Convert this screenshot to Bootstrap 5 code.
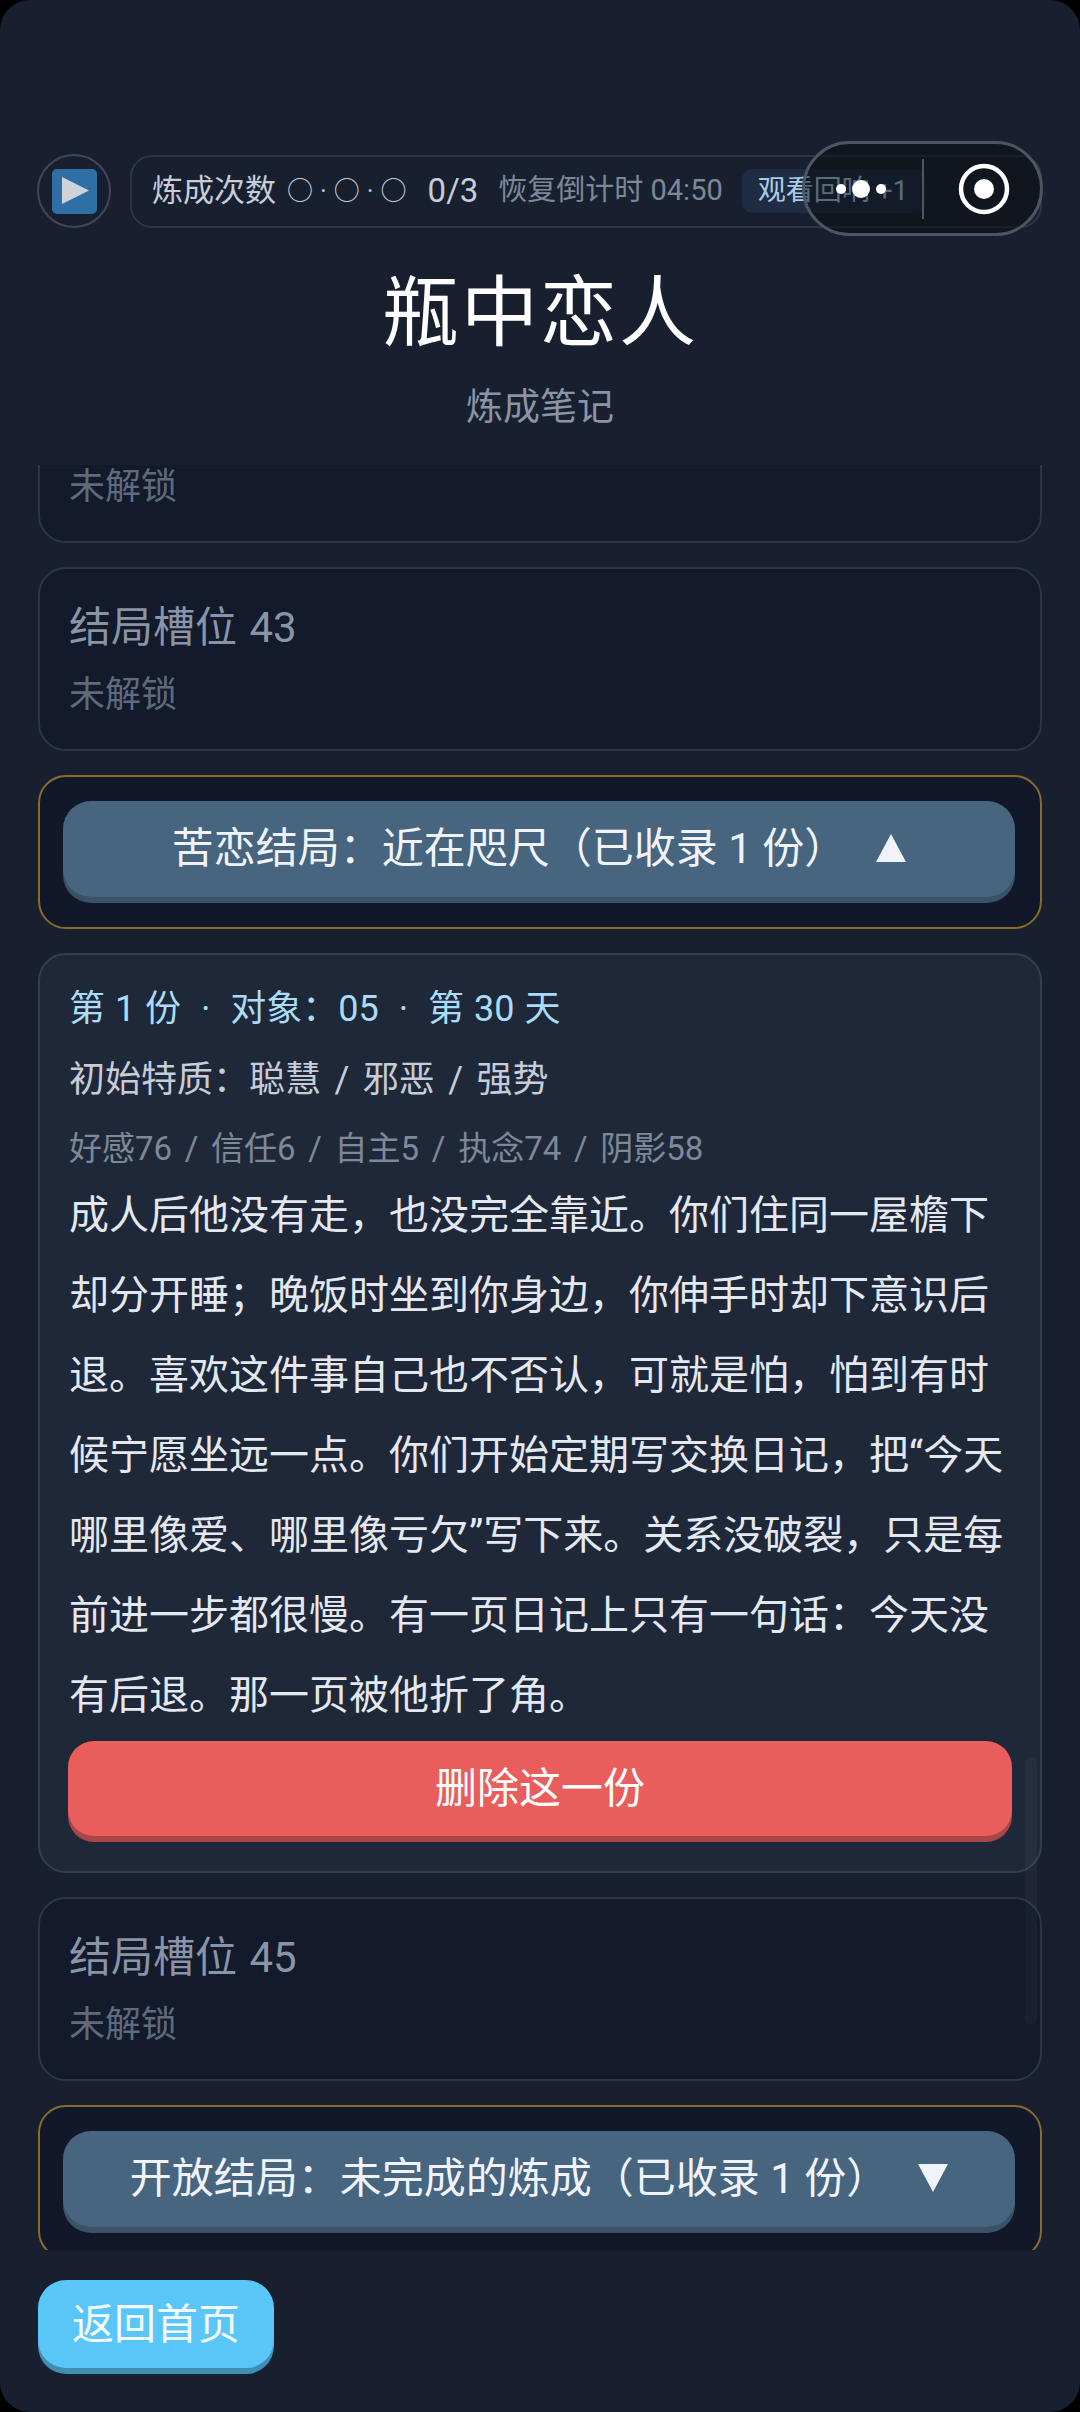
<!DOCTYPE html>
<html lang="zh-CN">
<head>
  <meta charset="UTF-8">
  <title>瓶中恋人</title>
  <meta name="viewport" content="width=device-width, initial-scale=1">
  <link href="https://cdn.jsdelivr.net/npm/bootstrap@5.3.3/dist/css/bootstrap.min.css" rel="stylesheet">
  <style>
    body {
      background: #000;
      font-family: Roboto, "Noto Sans CJK SC", sans-serif;
    }
    .app-shell {
      position: relative;
      height: 2412px;
      background: #182030;
      border-radius: 30px;
      padding-top: 154px;
      overflow: hidden;
    }
    .top-row {
      padding: 0 38px 0 37px;
      gap: 19px;
    }
    .logo-ring {
      width: 74px;
      height: 74px;
      flex: none;
      border: 2px solid #3f4759;
      border-radius: 50%;
    }
    .logo-box {
      width: 45px;
      height: 45px;
      background: #2f6fa6;
      border-radius: 5px;
    }
    .stat-pill {
      height: 73px;
      border: 2px solid #2d3546;
      border-radius: 22px;
      padding-left: 20px;
      white-space: nowrap;
      flex: 1;
      min-width: 0;
    }
    .stat-label { font-size: 31px; color: #c6ccd8; }
    .stat-dots { font-size: 26px; color: #c6ccd8; margin-left: 11px; letter-spacing: 7px; }
    .stat-count { font-size: 33px; color: #c6ccd8; margin-left: 14px; }
    .stat-timer { font-size: 29px; color: #7d8899; margin-left: 20px; }
    .echo-chip {
      height: 44px;
      margin-left: 19px;
      padding: 0 18px 0 16px;
      background: #1f2c44;
      border-radius: 10px;
      font-size: 28px;
      color: #a9cce6;
    }
    .mini-capsule {
      position: absolute;
      left: 802px;
      top: 141px;
      width: 241px;
      height: 95px;
      background: rgba(8, 9, 12, 0.5);
      border: 3px solid #50545f;
      border-radius: 48px;
    }
    .mini-dots { width: 117px; padding-right: 6px; gap: 6px; }
    .mini-dots i { display: block; background: #fff; border-radius: 50%; width: 10px; height: 10px; }
    .mini-dots i.big { width: 18px; height: 18px; }
    .mini-line { width: 2px; height: 60px; background: #50545f; }
    .mini-target { padding-left: 3px; }
    .page-title {
      font-size: 77px;
      line-height: 76px;
      font-weight: 400;
      color: #fff;
      margin: 48px 0 0;
      letter-spacing: 2px;
    }
    .page-sub {
      font-size: 37px;
      line-height: 50px;
      color: #8a94a6;
      margin: 31px 0 32px;
    }
    .scroll-area {
      position: relative;
      height: 1785px;
      overflow: hidden;
      padding: 0 38px;
    }
    .scroll-inner {
      margin-top: -106px;
      gap: 24px;
    }
    .slot-card {
      background: #121a2b;
      border: 2px solid #2d3546;
      border-radius: 28px;
      padding: 29px 29px 0;
      height: 184px;
      flex: none;
    }
    .slot-name { font-size: 42px; line-height: 60px; color: #8a94a6; word-spacing: 2px; }
    .slot-lock { font-size: 36px; line-height: 50px; color: #5f6b7d; margin-top: 12px; }
    .group-card {
      background: #111829;
      border: 2px solid #8a6a2d;
      border-radius: 28px;
      padding: 24px 25px 30px 23px;
      flex: none;
    }
    .group-btn {
      display: flex;
      align-items: center;
      justify-content: center;
      gap: 30px;
      width: 100%;
      height: 96px;
      padding-bottom: 3px;
      background: #47657f;
      border: 0;
      border-radius: 28px;
      box-shadow: 0 6px 0 #3a5267;
      color: #f0f4fa;
      font-size: 42px;
    }
    .detail-card {
      background: #1f2839;
      border: 2px solid #343e52;
      border-radius: 28px;
      padding: 27px 28px 35px 29px;
      flex: none;
    }
    .meta-one { font-size: 36px; line-height: 54px; color: #a9dcf8; margin-bottom: 17px; word-spacing: 1px; }
    .meta-dot { margin: 0 10px; }
    .meta-two { font-size: 36px; line-height: 54px; color: #c6ccd8; margin-bottom: 18px; word-spacing: 4.5px; }
    .meta-three { font-size: 33px; line-height: 48px; color: #7d8899; margin-bottom: 3px; word-spacing: 4.5px; }
    .story-text { font-size: 40px; line-height: 80px; color: #e3e8f1; white-space: nowrap; margin: 0 0 5px; }
    .del-btn {
      display: block;
      width: calc(100% + 1px);
      height: 95px;
      margin-left: -1px;
      background: #e95d5d;
      border: 0;
      border-radius: 26px;
      box-shadow: 0 6px 0 #a84545;
      color: #fff;
      font-size: 42px;
    }
    .scroll-thumb {
      position: absolute;
      right: 43px;
      top: 1292px;
      width: 12px;
      height: 268px;
      background: rgba(255, 255, 255, 0.03);
      border-radius: 6px;
    }
    .foot-bar { padding: 30px 38px 0; }
    .home-btn {
      width: 236px;
      height: 88px;
      background: #5ac6f8;
      border: 0;
      border-radius: 28px;
      box-shadow: 0 6px 0 #3f8fb5;
      color: #f2f9ff;
      font-size: 42px;
      padding: 0;
    }
  </style>
</head>
<body class="m-0">
  <div class="app-shell">
    <!-- top stats -->
    <div class="top-row d-flex align-items-center">
      <div class="logo-ring d-flex align-items-center justify-content-center">
        <div class="logo-box d-flex align-items-center justify-content-center">
          <svg width="45" height="45" viewBox="0 0 45 45"><polygon points="10,8 37,21.5 10,35" fill="#cfd3d9"/></svg>
        </div>
      </div>
      <div class="stat-pill d-flex align-items-center">
        <span class="stat-label">炼成次数</span>
        <span class="stat-dots">○·○·○</span>
        <span class="stat-count">0/3</span>
        <span class="stat-timer">恢复倒计时 04:50</span>
        <span class="echo-chip d-flex align-items-center">观看回响 +1</span>
      </div>
    </div>

    <div class="mini-capsule d-flex align-items-center">
      <div class="mini-dots d-flex align-items-center justify-content-center"><i></i><i class="big"></i><i></i></div>
      <div class="mini-line"></div>
      <div class="mini-target flex-grow-1 d-flex justify-content-center">
        <svg width="52" height="52" viewBox="0 0 52 52"><circle cx="26" cy="26" r="23" fill="none" stroke="#fff" stroke-width="4.5"/><circle cx="26" cy="26" r="10" fill="#fff"/></svg>
      </div>
    </div>

    <h1 class="page-title text-center">瓶中恋人</h1>
    <div class="page-sub text-center">炼成笔记</div>

    <!-- ending list -->
    <div class="scroll-area">
      <div class="scroll-inner d-flex flex-column">
        <div class="slot-card">
          <div class="slot-name">结局槽位 42</div>
          <div class="slot-lock">未解锁</div>
        </div>
        <div class="slot-card">
          <div class="slot-name">结局槽位 43</div>
          <div class="slot-lock">未解锁</div>
        </div>
        <div class="group-card">
          <button class="group-btn" type="button">
            <span>苦恋结局：近在咫尺（已收录 1 份）</span>
            <svg width="30" height="30" viewBox="0 0 30 30"><polygon points="15,1 30,29 0,29" fill="#f0f4fa"/></svg>
          </button>
        </div>
        <div class="detail-card">
          <div class="meta-one">第 1 份 <span class="meta-dot">·</span> 对象：05 <span class="meta-dot">·</span> 第 30 天</div>
          <div class="meta-two">初始特质：聪慧 / 邪恶 / 强势</div>
          <div class="meta-three">好感76 / 信任6 / 自主5 / 执念74 / 阴影58</div>
          <p class="story-text">成人后他没有走，也没完全靠近。你们住同一屋檐下<br>却分开睡；晚饭时坐到你身边，你伸手时却下意识后<br>退。喜欢这件事自己也不否认，可就是怕，怕到有时<br>候宁愿坐远一点。你们开始定期写交换日记，把“今天<br>哪里像爱、哪里像亏欠”写下来。关系没破裂，只是每<br>前进一步都很慢。有一页日记上只有一句话：今天没<br>有后退。那一页被他折了角。</p>
          <button class="del-btn" type="button">删除这一份</button>
        </div>
        <div class="slot-card">
          <div class="slot-name">结局槽位 45</div>
          <div class="slot-lock">未解锁</div>
        </div>
        <div class="group-card">
          <button class="group-btn" type="button">
            <span>开放结局：未完成的炼成（已收录 1 份）</span>
            <svg width="30" height="30" viewBox="0 0 30 30"><polygon points="0,1 30,1 15,29" fill="#f0f4fa"/></svg>
          </button>
        </div>
      </div>
      <div class="scroll-thumb"></div>
    </div>

    <div class="foot-bar">
      <button class="home-btn" type="button">返回首页</button>
    </div>
  </div>
  <script src="https://cdn.jsdelivr.net/npm/bootstrap@5.3.3/dist/js/bootstrap.bundle.min.js"></script>
</body>
</html>
